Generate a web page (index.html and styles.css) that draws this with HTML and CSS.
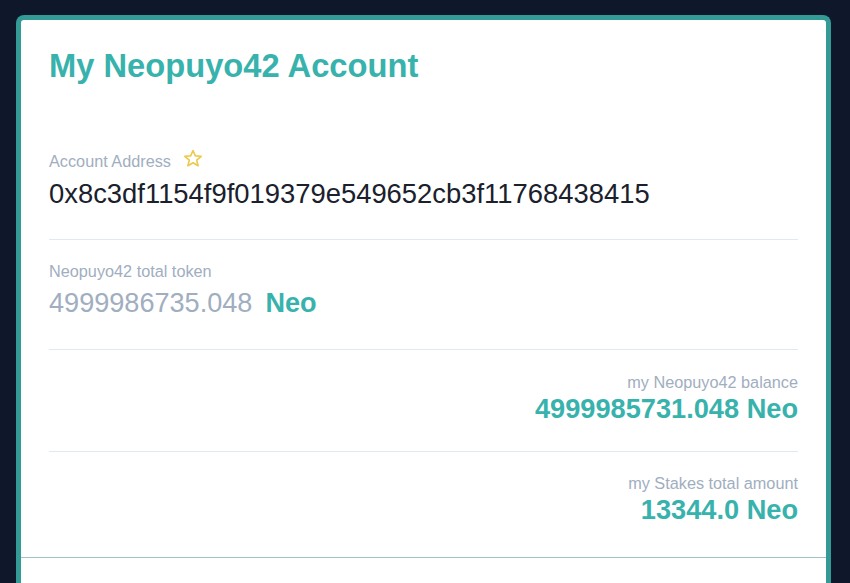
FILE: index.html
```html
<!DOCTYPE html>
<html lang="en">
<head>
<meta charset="utf-8">
<title>My Neopuyo42 Account</title>
<link rel="stylesheet" href="styles.css">
</head>
<body>
<main class="card">
  <h1 class="title">My Neopuyo42 Account</h1>

  <section class="row row-address">
    <div class="label label-star">
      <span>Account Address</span>
      <svg class="star" width="20" height="19" viewBox="0 0 20 19" aria-hidden="true">
        <polygon points="10,1.5 12.35,6.9 18.2,7.3 13.7,11.1 15.1,16.8 10,13.7 4.9,16.8 6.3,11.1 1.8,7.3 7.65,6.9" fill="none" stroke="#ecc94b" stroke-width="1.6" stroke-linejoin="round"/>
      </svg>
    </div>
    <div class="value value-address">0x8c3df1154f9f019379e549652cb3f11768438415</div>
  </section>

  <section class="row row-total">
    <div class="label">Neopuyo42 total token</div>
    <div class="value value-total"><span class="muted">4999986735.048</span><span class="unit">Neo</span></div>
  </section>

  <section class="row row-right row-balance">
    <div class="label">my Neopuyo42 balance</div>
    <div class="value strong value-balance">4999985731.048 Neo</div>
  </section>

  <section class="row row-right row-stakes">
    <div class="label">my Stakes total amount</div>
    <div class="value strong value-stakes">13344.0 Neo</div>
  </section>

  <div class="footer-line"></div>
</main>
</body>
</html>
```

FILE: styles.css
```css
* { box-sizing: border-box; }

html, body {
  margin: 0;
  padding: 0;
  background: #0f182b;
  height: 100%;
  overflow: hidden;
}

body {
  font-family: "Liberation Sans", Arial, Helvetica, sans-serif;
  padding: 15px 19px 0 16px;
}

.card {
  background: #ffffff;
  border: 5px solid #339a95;
  border-bottom: none;
  border-radius: 8px 8px 0 0;
  padding: 26px 28px 0 28px;
  min-height: 568px;
}

.title {
  margin: 0;
  font-size: 32.7px;
  line-height: 40px;
  font-weight: 700;
  color: #38b2ac;
}

.row {
  border-bottom: 1px solid #e2e8f0;
}

.row-address { margin-top: 65px; padding-bottom: 31px; }
.row-total { padding: 21px 0 32px; }
.row-balance { padding: 22px 0 28px; }
.row-stakes { border-bottom: none; padding: 21px 0 33px; }

.row-right { text-align: right; }

.label {
  font-size: 16.25px;
  line-height: 20px;
  color: #a0aec0;
}

.label-star {
  display: flex;
  align-items: center;
  gap: 12px;
  height: 20px;
}

.star { display: block; margin-top: -6px; }

.value {
  font-size: 27.4px;
  line-height: 28px;
  color: #1a202c;
}

.value-address { margin-top: 9px; }
.value-total { margin-top: 8px; font-size: 27.1px; }
.value-balance { margin-top: 3px; font-size: 27.2px; }
.value-stakes { margin-top: 3px; font-size: 27.2px; }

.muted { color: #a0aec0; }

.unit {
  color: #38b2ac;
  font-weight: 700;
  margin-left: 13px;
}

.strong {
  color: #38b2ac;
  font-weight: 700;
}

.footer-line {
  height: 1px;
  background: #9fc3c1;
  margin: 0 -28px;
}
```
